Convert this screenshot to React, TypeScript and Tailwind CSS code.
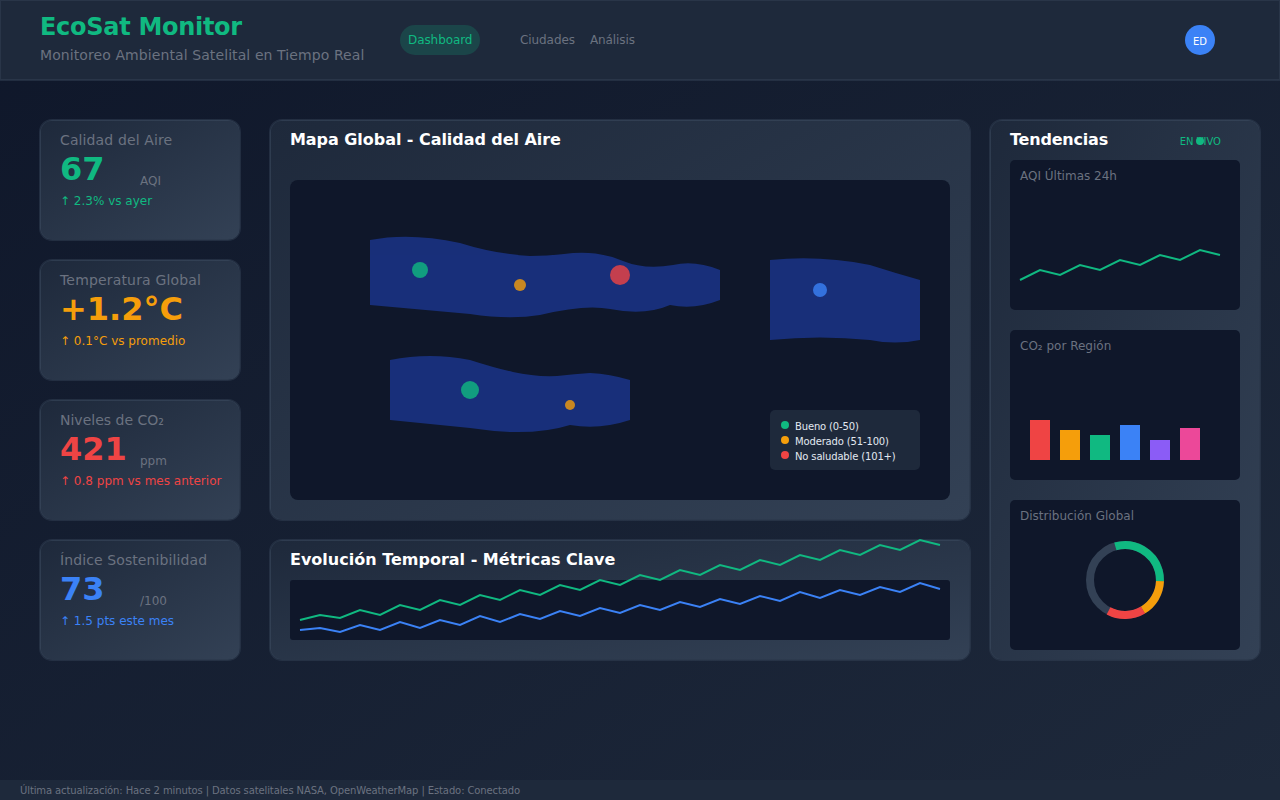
const green = "300,620 320,615 340,618 360,610 380,615 400,605 420,610 440,600 460,605 480,595 500,600 520,590 540,595 560,585 580,590 600,580 620,585 640,575 660,580 680,570 700,575 720,565 740,570 760,560 780,565 800,555 820,560 840,550 860,555 880,545 900,550 920,540 940,545";
const blue = "300,630 320,628 340,632 360,625 380,630 400,622 420,628 440,620 460,625 480,616 500,622 520,614 540,619 560,611 580,616 600,608 620,613 640,605 660,610 680,602 700,607 720,599 740,604 760,596 780,601 800,592 820,598 840,590 860,595 880,587 900,592 920,583 940,589";
const aqi = "1020,280 1040,270 1060,275 1080,265 1100,270 1120,260 1140,265 1160,255 1180,260 1200,250 1220,255";

const stats = [
  { label: "Calidad del Aire", labelTracking: "tracking-[0.12px]", value: "67", unit: "AQI", change: "↑ 2.3% vs ayer", color: "text-[#10b981]" },
  { label: "Temperatura Global", labelTracking: "tracking-[0.17px]", value: "+1.2°C", unit: "", change: "↑ 0.1°C vs promedio", color: "text-[#f59e0b]" },
  { label: "Niveles de CO₂", labelTracking: "", value: "421", unit: "ppm", change: "↑ 0.8 ppm vs mes anterior", color: "text-[#ef4444]" },
  { label: "Índice Sostenibilidad", labelTracking: "tracking-[0.1px]", value: "73", unit: "/100", change: "↑ 1.5 pts este mes", color: "text-[#3b82f6]" },
];

const bars = [
  { height: "h-[40px]", color: "bg-[#ef4444]" },
  { height: "h-[30px]", color: "bg-[#f59e0b]" },
  { height: "h-[25px]", color: "bg-[#10b981]" },
  { height: "h-[35px]", color: "bg-[#3b82f6]" },
  { height: "h-[20px]", color: "bg-[#8b5cf6]" },
  { height: "h-[32px]", color: "bg-[#ec4899]" },
];

const legend = [
  { label: "Bueno (0-50)", color: "bg-[#10b981]" },
  { label: "Moderado (51-100)", color: "bg-[#f59e0b]" },
  { label: "No saludable (101+)", color: "bg-[#ef4444]" },
];

const panel = "shrink-0 rounded-[12px] border border-[#334155]/50 ring-1 ring-[#334155]/50 bg-linear-to-br from-[#1e293b] to-[#334155]";

function StatCard({ label, labelTracking, value, unit, change, color }: (typeof stats)[number]) {
  return (
    <div className={`${panel} h-[120px] px-[19px] pt-[9px]`}>
      <p className={`text-[14px] leading-[20px] text-[#6b7280] ${labelTracking}`}>{label}</p>
      <div className="flex h-[38px] items-start">
        <span className={`min-w-[80px] text-[32px] leading-[39px] font-bold ${color}`}>{value}</span>
        <span className="mt-[23px] text-[12px] leading-[16px] text-[#6b7280]">{unit}</span>
      </div>
      <p className={`mt-[5px] whitespace-nowrap text-[12px] leading-[16px] ${color}`}>{change}</p>
    </div>
  );
}

function ChartCard({ title, children }: { title: string; children: React.ReactNode }) {
  return (
    <div className="flex h-[150px] flex-col rounded-[5px] bg-[#0f172a]">
      <p className="px-[10px] pt-[8px] text-[12px] leading-[16px] text-[#6b7280]">{title}</p>
      {children}
    </div>
  );
}

export default function App() {
  return (
    <div className="flex h-[800px] w-[1280px] flex-col overflow-hidden bg-linear-to-br from-[#0f172a] to-[#1e293b] font-['DejaVu_Sans',sans-serif]">
      <header className="flex h-[80px] shrink-0 items-center border border-[#334155]/50 bg-[#1e293b] pl-[39px] pr-[64px] ring-1 ring-[#334155]/50">
        <div className="mb-[3px] w-[360px]">
          <h1 className="text-[24px] leading-[28px] font-bold tracking-[-0.29px] text-[#10b981]">EcoSat Monitor</h1>
          <p className="mt-[5px] whitespace-nowrap text-[14px] leading-[18px] tracking-[0.09px] text-[#6b7280]">Monitoreo Ambiental Satelital en Tiempo Real</p>
        </div>
        <nav className="flex items-center text-[12px] tracking-[-0.08px] text-[#6b7280]">
          <a className="flex h-[30px] w-[80px] items-center rounded-[15px] bg-[#10b981]/20 pl-[8px] text-[#10b981]">Dashboard</a>
          <a className="ml-[40px]">Ciudades</a>
          <a className="ml-[15px]">Análisis</a>
        </nav>
        <div className="ml-auto flex h-[30px] w-[30px] items-center justify-center rounded-full bg-[#3b82f6] pt-[2px] text-[10px] text-white">ED</div>
      </header>

      <main className="flex px-[40px] pt-[40px]">
        <div className="mr-[30px] flex w-[200px] shrink-0 flex-col gap-[20px]">
          {stats.map((stat) => (
            <StatCard key={stat.label} {...stat} />
          ))}
        </div>

        <div className="mr-[20px] flex w-[700px] shrink-0 flex-col gap-[20px]">
          <section className={`${panel} h-[400px] px-[19px] pt-[9px]`}>
            <h2 className="text-[16px] leading-[20px] font-bold tracking-[-0.05px] text-white">Mapa Global - Calidad del Aire</h2>
            <div className="relative mt-[30px] h-[320px] rounded-[8px] bg-[#0f172a]">
              <svg viewBox="290 180 660 320" className="h-full w-full">
                <g fill="#1e40af" opacity="0.6">
                  <path d="M370 240 Q410 232 460 243 Q495 254 530 256 Q550 256 573 253 Q600 251 623 261 Q645 270 673 265 Q695 260 720 270 L720 300 Q695 310 670 305 Q645 316 610 309 Q585 304 540 315 Q510 320 470 314 L370 305 Z" />
                  <path d="M390 360 Q430 352 470 360 Q495 368 513 372 Q535 377 557 376 Q575 374 590 373 Q610 374 630 380 L630 420 Q600 430 570 425 Q545 433 510 432 Q490 431 470 428 L390 420 Z" />
                  <path d="M770 260 Q820 255 870 265 Q895 273 920 280 L920 340 Q895 345 870 340 Q820 335 770 340 Z" />
                </g>
                <g opacity="0.8">
                  <circle cx="420" cy="270" r="8" fill="#10b981" />
                  <circle cx="520" cy="285" r="6" fill="#f59e0b" />
                  <circle cx="620" cy="275" r="10" fill="#ef4444" />
                  <circle cx="820" cy="290" r="7" fill="#3b82f6" />
                  <circle cx="470" cy="390" r="9" fill="#10b981" />
                  <circle cx="570" cy="405" r="5" fill="#f59e0b" />
                </g>
              </svg>
              <div className="absolute left-[480px] top-[230px] h-[60px] w-[150px] rounded-[5px] bg-[#1e293b] pl-[11px] pt-[8px]">
                {legend.map((item) => (
                  <div key={item.label} className="flex h-[15px] items-start gap-[6px] text-[10px] leading-[12px] tracking-[-0.15px] text-[#e2e8f0]">
                    <span className={`mt-[3px] h-[8px] w-[8px] rounded-full ${item.color}`} />
                    <span className="mt-[3px] whitespace-nowrap">{item.label}</span>
                  </div>
                ))}
              </div>
            </div>
          </section>

          <section className={`${panel} h-[120px] px-[19px] pt-[9px]`}>
            <h2 className="text-[16px] leading-[20px] font-bold text-white">Evolución Temporal - Métricas Clave</h2>
            <div className="mt-[10px] h-[60px] rounded-[3px] bg-[#0f172a]">
              <svg viewBox="290 580 660 60" className="h-full w-full overflow-visible" fill="none" strokeWidth="2">
                <polyline points={green} stroke="#10b981" />
                <polyline points={blue} stroke="#3b82f6" />
              </svg>
            </div>
          </section>
        </div>

        <aside className={`${panel} flex h-[540px] w-[270px] flex-col px-[19px] pt-[9px]`}>
          <div className="flex h-[20px] items-center justify-between">
            <h2 className="text-[16px] leading-[20px] font-bold tracking-[-0.2px] text-white">Tendencias</h2>
            <span className="relative mr-[19px] mt-[2px] text-[10px] text-[#10b981]">
              EN VIVO
              <span className="absolute left-[16px] top-[3px] h-[8px] w-[8px] rounded-full bg-[#10b981]" />
            </span>
          </div>
          <div className="mt-[10px] flex flex-col gap-[20px]">
            <ChartCard title="AQI Últimas 24h">
              <svg viewBox="1010 184 230 126" className="h-[126px] w-[230px]" fill="none">
                <polyline points={aqi} stroke="#10b981" strokeWidth="2" />
              </svg>
            </ChartCard>
            <ChartCard title="CO₂ por Región">
              <div className="mt-auto flex items-end gap-[10px] pb-[20px] pl-[20px]">
                {bars.map((bar) => (
                  <div key={bar.color} className={`w-[20px] ${bar.height} ${bar.color}`} />
                ))}
              </div>
            </ChartCard>
            <ChartCard title="Distribución Global">
              <svg viewBox="1075 530 100 100" className="mx-auto mt-[6px] h-[100px] w-[100px]" fill="none" strokeWidth="8">
                <circle cx="1125" cy="580" r="35" stroke="#334155" />
                <g transform="rotate(-106 1125 580)">
                  <circle cx="1125" cy="580" r="35" stroke="#10b981" strokeDasharray="66 154" />
                </g>
                <g transform="rotate(2 1125 580)">
                  <circle cx="1125" cy="580" r="35" stroke="#f59e0b" strokeDasharray="35 185" />
                </g>
                <g transform="rotate(59 1125 580)">
                  <circle cx="1125" cy="580" r="35" stroke="#ef4444" strokeDasharray="36 184" />
                </g>
              </svg>
            </ChartCard>
          </div>
        </aside>
      </main>

      <footer className="mt-auto flex h-[20px] shrink-0 items-center bg-[#1e293b] pl-[20px] text-[10px] tracking-[-0.11px] text-[#6b7280]">
        Última actualización: Hace 2 minutos | Datos satelitales NASA, OpenWeatherMap | Estado: Conectado
      </footer>
    </div>
  );
}
